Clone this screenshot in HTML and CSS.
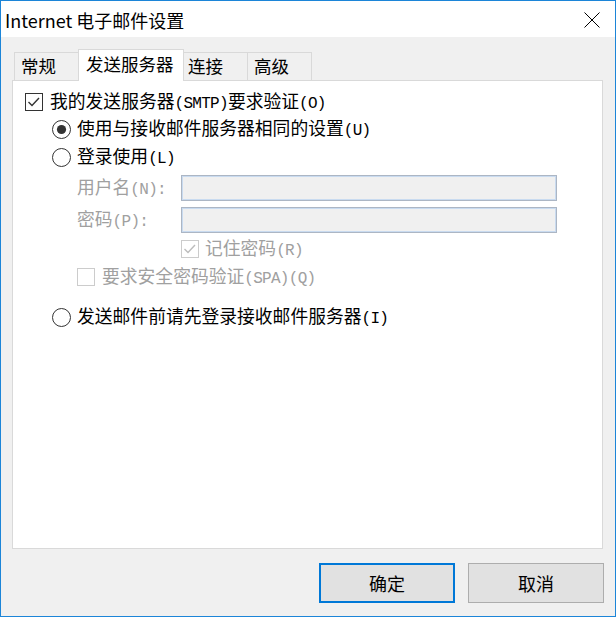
FILE: index.html
```html
<!DOCTYPE html>
<html lang="zh-CN">
<head>
  <meta charset="UTF-8">
  <title>Internet 电子邮件设置</title>
  <link rel="stylesheet" href="styles.css">
</head>
<body>

  <div class="window">
    <!-- Title bar -->
    <div class="titlebar">
      <span class="title">Internet 电子邮件设置</span>
      <span class="close">
        <svg width="16" height="16" viewBox="0 0 16 16">
          <path d="M0.5 0.5 L15.5 15.5 M15.5 0.5 L0.5 15.5" stroke="#000" stroke-width="1" fill="none"/>
        </svg>
      </span>
    </div>

    <div class="content">
      <!-- Tabs -->
      <div class="tabs">
        <div class="tab tab-general">常规</div>
        <div class="tab tab-active">发送服务器</div>
        <div class="tab tab-connect">连接</div>
        <div class="tab tab-advanced">高级</div>
      </div>

      <div class="panel">
        <div class="row row-auth">
          <span class="check">
            <svg width="18" height="18" viewBox="0 0 18 18">
              <rect x="0.5" y="0.5" width="17" height="17" fill="#fff" stroke="#333"/>
              <polyline points="3.5,9 7,12.5 14,5" fill="none" stroke="#333" stroke-width="1.4"/>
            </svg>
          </span>
          <span>我的发送服务器<span class="en">(SMTP)</span>要求验证<span class="en">(O)</span></span>
        </div>

        <div class="row row-same">
          <span class="radio">
            <svg width="19" height="19" viewBox="0 0 19 19">
              <circle cx="9.5" cy="9.5" r="9" fill="#fff" stroke="#333"/>
              <circle cx="9.5" cy="9.5" r="4.6" fill="#333"/>
            </svg>
          </span>
          <span>使用与接收邮件服务器相同的设置<span class="en">(U)</span></span>
        </div>

        <div class="row row-login">
          <span class="radio">
            <svg width="19" height="19" viewBox="0 0 19 19">
              <circle cx="9.5" cy="9.5" r="9" fill="#fff" stroke="#333"/>
            </svg>
          </span>
          <span>登录使用<span class="en">(L)</span></span>
        </div>

        <div class="row row-field row-user disabled">
          <span class="label">用户名<span class="en">(N):</span></span>
          <span class="field"></span>
        </div>

        <div class="row row-field row-pass disabled">
          <span class="label">密码<span class="en">(P):</span></span>
          <span class="field"></span>
        </div>

        <div class="row row-remember disabled">
          <span class="check">
            <svg width="18" height="18" viewBox="0 0 18 18">
              <rect x="0.5" y="0.5" width="17" height="17" fill="#fff" stroke="#cccccc"/>
              <polyline points="3.5,9 7,12.5 14,5" fill="none" stroke="#bcbcbc" stroke-width="1.4"/>
            </svg>
          </span>
          <span>记住密码<span class="en">(R)</span></span>
        </div>

        <div class="row row-spa disabled">
          <span class="check">
            <svg width="18" height="18" viewBox="0 0 18 18">
              <rect x="0.5" y="0.5" width="17" height="17" fill="#fff" stroke="#cccccc"/>
            </svg>
          </span>
          <span>要求安全密码验证<span class="en">(SPA)(Q)</span></span>
        </div>

        <div class="row row-before">
          <span class="radio">
            <svg width="19" height="19" viewBox="0 0 19 19">
              <circle cx="9.5" cy="9.5" r="9" fill="#fff" stroke="#333"/>
            </svg>
          </span>
          <span>发送邮件前请先登录接收邮件服务器<span class="en">(I)</span></span>
        </div>
      </div>

      <!-- Buttons -->
      <div class="buttons">
        <div class="button button-default">确定</div>
        <div class="button">取消</div>
      </div>
    </div>
  </div>

</body>
</html>
```

FILE: styles.css
```css
body {
  margin: 0;
  background: #ffffff;
  font-family: "Noto Sans CJK SC", "Noto Sans", sans-serif;
  color: #000;
}

.window {
  width: 616px;
  height: 617px;
  box-sizing: border-box;
  border: 1px solid #1c85d8;
  display: flex;
  flex-direction: column;
}

/* Title bar */
.titlebar {
  height: 36px;
  background: #fff;
  display: flex;
  align-items: center;
  justify-content: space-between;
}

.title {
  padding-left: 4px;
  font-size: 18px;
  line-height: 24px;
  margin-top: 2px;
}

.close {
  width: 47px;
  height: 36px;
  display: flex;
  align-items: center;
  justify-content: center;
  margin-top: 1px;
}

.close svg {
  display: block;
}

.content {
  flex: 1;
  background: #f0f0f0;
  padding-top: 12px;
}

/* Tabs */
.tabs {
  display: flex;
  align-items: flex-end;
  margin-left: 13px;
  height: 31px;
}

.tab {
  box-sizing: border-box;
  height: 28px;
  border: 1px solid #d9d9d9;
  border-right: none;
  border-bottom: none;
  background: #f0f0f0;
  font-size: 17.5px;
  line-height: 26px;
  white-space: nowrap;
}

.tab-general {
  width: 66px;
  padding-left: 6px;
}

.tab-active {
  width: 106px;
  height: 32px;
  margin: 0 -2px -1px -2px;
  padding-left: 7px;
  padding-top: 1px;
  border-right: 1px solid #d9d9d9;
  background: #fff;
  position: relative;
  z-index: 1;
}

.tab-connect {
  width: 65px;
  padding-left: 5px;
}

.tab-advanced {
  width: 65px;
  padding-left: 6px;
  border-right: 1px solid #d9d9d9;
}

/* Panel */
.panel {
  box-sizing: border-box;
  width: 591px;
  height: 469px;
  margin-left: 11px;
  border: 1px solid #d9d9d9;
  background: #fff;
  padding-top: 8px;
  padding-left: 12px;
}

.row {
  display: flex;
  align-items: center;
  height: 26px;
  font-size: 17.8px;
  line-height: 26px;
  white-space: nowrap;
}

.row svg {
  display: block;
}

.en {
  font-family: "Liberation Mono", monospace;
  font-size: 16px;
  letter-spacing: -0.7px;
}

.check {
  margin-right: 7px;
}

.radio {
  margin-right: 6px;
}

.disabled {
  color: #a0a0a0;
}

.row-same {
  margin-top: 1px;
  margin-left: 27px;
}

.row-login {
  margin-top: 2px;
  margin-left: 27px;
}

.row-field {
  margin-left: 52px;
}

.row-user {
  margin-top: 5px;
}

.row-pass {
  margin-top: 6px;
}

.label {
  width: 104px;
}

.field {
  box-sizing: border-box;
  width: 376px;
  height: 26px;
  border: 1px solid #acb6c4;
  box-shadow: inset 0 0 0 1px #c9dbf0;
  background: #f0f0f0;
}

.row-remember {
  margin-top: 3px;
  margin-left: 156px;
}

.row-remember .check {
  margin-right: 6px;
}

.row-spa {
  margin-top: 2px;
  margin-left: 52px;
}

.row-before {
  margin-top: 14px;
  margin-left: 27px;
}

/* Buttons */
.buttons {
  display: flex;
  justify-content: flex-end;
  gap: 13px;
  margin-top: 14px;
  padding-right: 11px;
}

.button {
  box-sizing: border-box;
  width: 136px;
  height: 40px;
  border: 1px solid #adadad;
  background: #e1e1e1;
  font-size: 18px;
  display: flex;
  align-items: center;
  justify-content: center;
}

.button-default {
  border: 2px solid #0078d7;
}
```
